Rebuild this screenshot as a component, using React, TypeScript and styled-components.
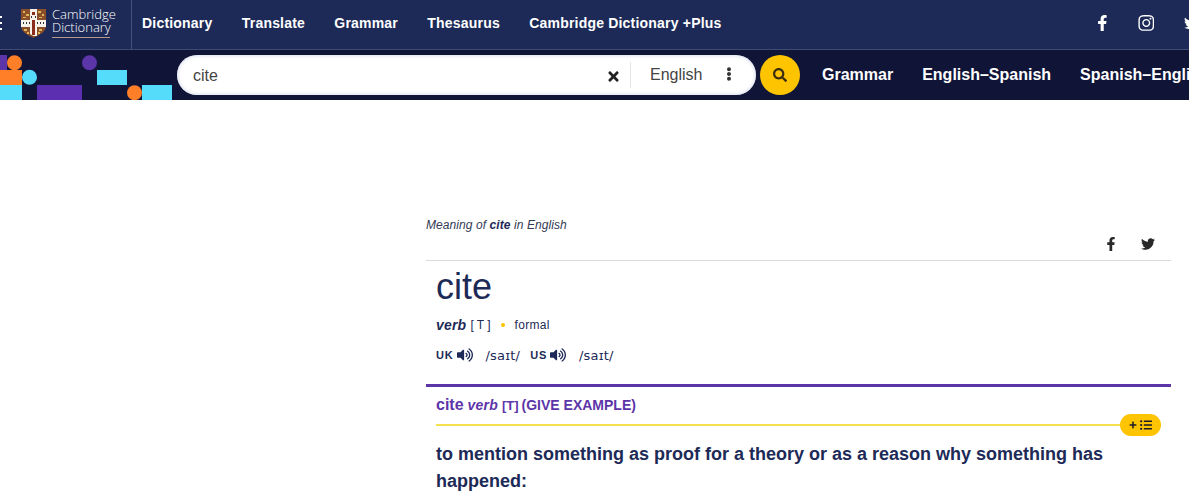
import React from "react";
import styled, { createGlobalStyle } from "styled-components";
import { FaFacebookF, FaInstagram, FaTwitter, FaTimes, FaEllipsisV, FaSearch, FaVolumeUp, FaPlus, FaListUl } from "react-icons/fa";

const Global = createGlobalStyle`
  html, body { margin: 0; padding: 0; background: #fff; overflow: hidden; }
  body { width: 1189px; height: 502px; font-family: "Liberation Sans", Arial, sans-serif; color: #1d2a57; }
`;

const Page = styled.div`
  width: 1189px;
  height: 502px;
  overflow: hidden;
  display: flex;
  flex-direction: column;
`;

const TopBar = styled.header`
  height: 50px;
  box-sizing: border-box;
  background: #1d2a57;
  border-bottom: 1px solid #3f4a75;
  display: flex;
  align-items: center;
  flex: none;
`;

const MenuDots = styled.div`
  width: 2px;
  height: 14px;
  margin-top: -4px;
  margin-right: 1px;
  flex: none;
  background: repeating-linear-gradient(#fff 0 2px, transparent 2px 6px);
`;

const Brand = styled.div`
  display: flex;
  align-items: center;
  height: 49px;
  width: 129px;
  padding-left: 18px;
  box-sizing: border-box;
  border-right: 1px solid #46517c;
  flex: none;
`;

const BrandText = styled.div`
  margin-left: 6px;
  margin-top: -3px;
  font-family: "Open Sans", "Liberation Sans", sans-serif;
  font-size: 13px;
  line-height: 13px;
  color: #fff;
  font-weight: 300;
  white-space: nowrap;
`;

const BrandBottom = styled.div`
  border-bottom: 1px solid #b69a85;
  padding-bottom: 3px;
  width: 58px;
  white-space: nowrap;
`;

const Nav = styled.nav`
  display: flex;
  gap: 29.3px;
  margin-left: 10px;
  margin-top: -3px;
`;

const NavLink = styled.a`
  color: #fff;
  font-size: 14px;
  font-weight: 700;
  letter-spacing: 0.2px;
  white-space: nowrap;
`;

const Social = styled.div`
  margin-left: auto;
  margin-top: -3px;
  display: flex;
  align-items: center;
  gap: 29px;
  color: #fff;
  font-size: 16px;
  margin-right: -10px;
  width: 104px;
  flex: none;
`;

const InstagramIcon = styled(FaInstagram)`
  font-size: 18px;
  margin: 0 1px 0 -1px;
`;

const SearchBar = styled.div`
  height: 50px;
  background: #101538;
  display: flex;
  align-items: center;
  flex: none;
  position: relative;
  overflow: hidden;
`;

const Art = styled.svg`
  width: 172px;
  height: 50px;
  flex: none;
  display: block;
`;

const SearchBox = styled.div`
  margin-left: 5px;
  width: 579px;
  height: 40px;
  background: #fff;
  border-radius: 20px;
  display: flex;
  align-items: center;
  box-sizing: border-box;
  padding-left: 16px;
  flex: none;
  box-shadow: inset 0 0 4px #c9cfe6;
`;

const Query = styled.span`
  font-size: 16px;
  color: #444;
  flex: 1;
  padding-top: 1px;
`;

const ClearIcon = styled(FaTimes)`
  font-size: 15px;
  color: #222;
  margin-right: 9px;
  margin-top: 2px;
`;

const Lang = styled.div`
  width: 126px;
  height: 26px;
  box-sizing: border-box;
  border-left: 1px solid #e6e6e6;
  display: flex;
  align-items: center;
  font-size: 16px;
  color: #444;
  padding-left: 19px;
`;

const LangDots = styled(FaEllipsisV)`
  font-size: 14px;
  color: #333;
  margin-left: 20px;
  margin-top: -2px;
`;

const SearchButton = styled.button`
  width: 40px;
  height: 40px;
  border: 0;
  padding: 0;
  margin-left: 4px;
  border-radius: 50%;
  background: #fec400;
  display: flex;
  align-items: center;
  justify-content: center;
  color: #3b2f10;
  font-size: 14px;
  flex: none;
`;

const SubNav = styled.nav`
  display: flex;
  gap: 29px;
  margin-left: 22px;
  flex: none;
`;

const SubLink = styled.a`
  color: #fff;
  font-size: 16px;
  font-weight: 700;
  white-space: nowrap;
`;

const Main = styled.main`
  margin-left: 426px;
  width: 745px;
  padding-top: 117px;
`;

const Meaning = styled.div`
  font-size: 12px;
  font-style: italic;
  line-height: 16px;
  color: #333a55;
  letter-spacing: 0.08px;
  b { color: #1d2a57; }
`;

const ShareRow = styled.div`
  height: 28px;
  display: flex;
  justify-content: flex-end;
  align-items: center;
  gap: 23px;
  padding: 0 16px 6px 0;
  box-sizing: border-box;
  font-size: 14px;
  color: #292929;
  border-bottom: 1px solid #d9d9d9;
`;

const Head = styled.div`
  padding-left: 10px;
`;

const Word = styled.h1`
  margin: 6px 0 0;
  font-size: 36px;
  line-height: 40px;
  font-weight: 400;
  color: #1d2a57;
`;

const GramRow = styled.div`
  margin-top: 10px;
  display: flex;
  align-items: center;
  height: 16px;
  font-size: 12px;
  color: #1d2a57;
`;

const Pos = styled.b`
  font-style: italic;
  font-size: 14px;
  letter-spacing: 0.2px;
  margin-right: 4px;
`;

const Bullet = styled.span`
  width: 4px;
  height: 4px;
  border-radius: 50%;
  background: #fec400;
  margin: 0 10px 0 10px;
`;

const Formal = styled.span`
  font-size: 12px;
  letter-spacing: 0.3px;
`;

const PronRow = styled.div`
  margin-top: 14px;
  height: 16px;
  display: flex;
  align-items: center;
  font-size: 14px;
  color: #1d2a57;
`;

const Region = styled.b`
  font-size: 11px;
  letter-spacing: 0.8px;
  margin-right: 3px;
`;

const Speaker = styled(FaVolumeUp)`
  font-size: 16px;
  margin-right: 13px;
`;

const Ipa = styled.span`
  font-family: "DejaVu Sans", "Liberation Sans", sans-serif;
  font-size: 13px;
  letter-spacing: 0.2px;
  margin-right: 10px;
`;

const Sense = styled.section`
  margin-top: 21px;
  border-top: 3px solid #5c35a9;
  position: relative;
`;

const SenseHead = styled.div`
  margin: 0 20px 0 10px;
  height: 39px;
  box-sizing: border-box;
  padding-top: 8px;
  border-bottom: 2px solid #f7e04b;
  font-size: 12px;
  line-height: 19px;
  color: #5c35a9;
  white-space: nowrap;
`;

const SenseWord = styled.b`
  font-size: 16px;
`;

const SensePos = styled.b`
  font-style: italic;
  font-size: 14px;
  letter-spacing: 0.2px;
  margin: 0 4px;
`;

const SenseGrammar = styled.span`
  font-size: 13px;
  font-weight: 700;
  margin-right: 3px;
`;

const SenseGuide = styled.b`
  font-size: 14px;
`;

const Badge = styled.div`
  position: absolute;
  right: 10px;
  top: 27px;
  width: 41px;
  height: 22px;
  background: #fec400;
  border-radius: 11px;
  display: flex;
  align-items: center;
  justify-content: center;
  gap: 3px;
  color: #1a1a2a;
  font-size: 10px;
`;

const Definition = styled.p`
  margin: 15px 0 0 10px;
  font-size: 18px;
  line-height: 27px;
  font-weight: 700;
  color: #1d2a57;
  width: 700px;
`;

const Crest = () => (
  <svg width="25" height="29" viewBox="0 0 25 29" style={{ flex: "none", marginTop: "-2px" }}>
    <path d="M0 0H25V17C25 23 18 26 12.5 29C7 26 0 23 0 17Z" fill="#8a4f28" />
    <path d="M2 2h2v2H2zM5 5h3v2H5zM2 8h3v1H2zM17 2h3v2h-3zM21 5h2v2h-2zM18 8h3v1h-3zM3 20h3v2H3zM6 23h2v2H6zM18 20h3v2h-3zM17 23h2v2h-2z" fill="#e0b65c" />
    <path d="M9 0h7v11H9zM0 11h25v7H0z" fill="#f7f3ea" />
    <path d="M11 3h3v3h-3zM11 11h3v7h-3z" fill="#8c2c1a" />
    <path d="M2 13h1v2H2zM5 13h1v2H5zM8 13h1v2H8zM16 13h1v2h-1zM19 13h1v2h-1zM22 13h1v2h-1zM10 7h1v2h-1zM14 7h1v2h-1z" fill="#333" />
    <path d="M9 18h7v9H12.5L9 25z" fill="#f7f3ea" />
    <path d="M11 18h3v8h-3z" fill="#8c2c1a" />
  </svg>
);

const Shapes = () => (
  <Art viewBox="0 0 172 50">
    <rect x="0" y="5" width="7" height="15" fill="#5c35a9" />
    <rect x="0" y="20" width="22" height="15" fill="#fe7f28" />
    <rect x="0" y="35" width="22" height="15" fill="#55dcfb" />
    <circle cx="14.5" cy="12.7" r="7.5" fill="#fe7f28" />
    <circle cx="29.5" cy="27.3" r="7.5" fill="#55dcfb" />
    <rect x="37" y="35" width="45" height="15" fill="#5c2fb0" />
    <circle cx="89.5" cy="12.7" r="7.5" fill="#5c35a9" />
    <rect x="97" y="20" width="30" height="15" fill="#55dcfb" />
    <circle cx="134.5" cy="42.7" r="7.5" fill="#fe7f28" />
    <rect x="142" y="35" width="30" height="15" fill="#55dcfb" />
  </Art>
);

export default function App() {
  return (
    <Page>
      <Global />
      <TopBar>
        <MenuDots />
        <Brand>
          <Crest />
          <BrandText>
            Cambridge
            <BrandBottom>Dictionary</BrandBottom>
          </BrandText>
        </Brand>
        <Nav>
          <NavLink>Dictionary</NavLink>
          <NavLink>Translate</NavLink>
          <NavLink>Grammar</NavLink>
          <NavLink>Thesaurus</NavLink>
          <NavLink>Cambridge Dictionary +Plus</NavLink>
        </Nav>
        <Social>
          <FaFacebookF />
          <InstagramIcon />
          <FaTwitter />
        </Social>
      </TopBar>
      <SearchBar>
        <Shapes />
        <SearchBox>
          <Query>cite</Query>
          <ClearIcon />
          <Lang>
            English
            <LangDots />
          </Lang>
        </SearchBox>
        <SearchButton aria-label="Search">
          <FaSearch />
        </SearchButton>
        <SubNav>
          <SubLink>Grammar</SubLink>
          <SubLink>English–Spanish</SubLink>
          <SubLink>Spanish–English</SubLink>
        </SubNav>
      </SearchBar>
      <Main>
        <Meaning>
          Meaning of <b>cite</b> in English
        </Meaning>
        <ShareRow>
          <FaFacebookF />
          <FaTwitter />
        </ShareRow>
        <Head>
          <Word>cite</Word>
          <GramRow>
            <Pos>verb</Pos> [ T ]
            <Bullet />
            <Formal>formal</Formal>
          </GramRow>
          <PronRow>
            <Region>UK</Region>
            <Speaker />
            <Ipa>/saɪt/</Ipa>
            <Region>US</Region>
            <Speaker />
            <Ipa>/saɪt/</Ipa>
          </PronRow>
        </Head>
        <Sense>
          <SenseHead>
            <SenseWord>cite</SenseWord>
            <SensePos>verb</SensePos>
            <SenseGrammar>[T]</SenseGrammar>
            <SenseGuide>(GIVE EXAMPLE)</SenseGuide>
          </SenseHead>
          <Badge>
            <FaPlus size={8} />
            <FaListUl size={12} />
          </Badge>
          <Definition>
            to mention something as proof for a theory or as a reason why something has happened:
          </Definition>
        </Sense>
      </Main>
    </Page>
  );
}
